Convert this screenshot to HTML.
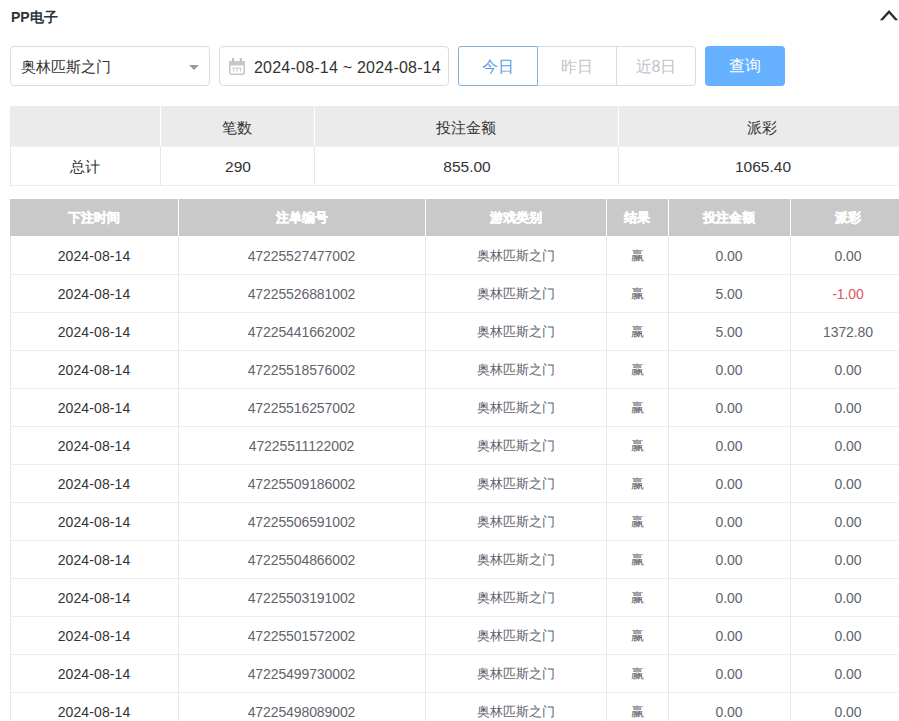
<!DOCTYPE html><html><head><meta charset="utf-8"><style>
*{margin:0;padding:0;box-sizing:border-box}
html,body{width:899px;height:721px;overflow:hidden;background:#fff}
body{position:relative;font-family:"Liberation Sans",sans-serif;color:#333}
.a{position:absolute}
.title{left:11px;top:8px;font-size:14px;font-weight:bold;color:#2b3340;line-height:18px}
.box{border:1px solid #dcdcdc;border-radius:4px;height:40px;top:46px;background:#fff}
.sel{left:10px;width:200px}
.date{left:219px;width:230px}
.seltxt{left:21px;top:57px;font-size:15px;line-height:20px;color:#333}
.datetxt{left:254px;top:58px;font-size:16px;letter-spacing:0.22px;line-height:20px;color:#333}
.btn{top:46px;height:40px;width:80px;border:1px solid #dcdcdc;font-size:16px;line-height:40px;text-align:center;color:#c0c4cc;background:#fff}
.q{left:705px;top:46px;width:80px;height:40px;border-radius:4px;background:#66b1ff;color:#fff;font-size:16px;font-weight:500;line-height:40px;text-align:center}
.sh{background:#ebebeb}
.cell{position:absolute;text-align:center;white-space:nowrap}
.st{font-size:15.5px;color:#333;line-height:20px}
.stc{font-size:15px}
.mh{background:#c9c9c9}
.mht{font-size:13px;font-weight:bold;color:#fff;line-height:18px;-webkit-text-stroke:0.45px #fff}
.mt{font-size:14px;line-height:18px;letter-spacing:-0.1px;color:#5f646c}
.hl{position:absolute;height:1px;background:#ececec}
.vl{position:absolute;width:1px;background:#e8e8e8}
</style></head><body>
<div class="a title">PP电子</div>
<svg class="a" style="left:878px;top:8px" width="22" height="14" viewBox="0 0 22 14"><path d="M1.8 12.2 L11 2.1 L20.2 12.2 L17.1 12.2 L11 5.5 L4.9 12.2 Z" fill="#262d3a"/></svg>
<div class="a box sel"></div>
<div class="a seltxt">奥林匹斯之门</div>
<svg class="a" style="left:189px;top:65px" width="10" height="6" viewBox="0 0 10 6"><path d="M0 0 L10 0 L5 5 Z" fill="#999"/></svg>
<div class="a box date"></div>
<svg class="a" style="left:228px;top:57px" width="18" height="19" viewBox="0 0 18 19"><g fill="none" stroke="#c8c8c8"><rect x="1.8" y="4.8" width="14.4" height="12.4" rx="1.5" stroke-width="1.6"/><path d="M4.5 11 H13.5 M5.5 11 V14.5 M9 11 V14.5 M12.5 11 V14.5" stroke-width="1.1"/></g><rect x="1" y="4" width="16" height="4.5" fill="#c8c8c8"/><rect x="4" y="1" width="2" height="4" fill="#c0c0c0"/><rect x="11.8" y="1" width="2" height="4" fill="#c0c0c0"/></svg>
<div class="a datetxt">2024-08-14 ~ 2024-08-14</div>
<div class="a btn" style="left:616px;width:80px;border-radius:0 4px 4px 0">近8日</div>
<div class="a btn" style="left:537px;width:80px">昨日</div>
<div class="a btn" style="left:458px;width:80px;border-color:#82b2da;color:#5a9fdc;border-radius:3px 0 0 3px">今日</div>
<div class="a q">查询</div>
<div class="a sh" style="left:10px;top:106px;width:896px;height:40px"></div>
<div class="hl" style="left:10px;top:185px;width:896px"></div>
<div class="hl" style="left:10px;top:146px;width:896px;background:#f2f2f2"></div>
<div class="vl" style="left:10px;top:106px;height:80px"></div>
<div class="vl" style="left:160px;top:106px;height:40px;background:#fff"></div>
<div class="vl" style="left:160px;top:146px;height:40px"></div>
<div class="vl" style="left:314px;top:106px;height:40px;background:#fff"></div>
<div class="vl" style="left:314px;top:146px;height:40px"></div>
<div class="vl" style="left:618px;top:106px;height:40px;background:#fff"></div>
<div class="vl" style="left:618px;top:146px;height:40px"></div>
<div class="cell st stc" style="left:10px;width:150px;top:118px"></div>
<div class="cell st stc" style="left:10px;width:150px;top:157px">总计</div>
<div class="cell st stc" style="left:160px;width:154px;top:118px">笔数</div>
<div class="cell st" style="left:161px;width:154px;top:156.5px">290</div>
<div class="cell st stc" style="left:314px;width:304px;top:118px">投注金额</div>
<div class="cell st" style="left:315px;width:304px;top:156.5px">855.00</div>
<div class="cell st stc" style="left:618px;width:288px;top:118px">派彩</div>
<div class="cell st" style="left:619px;width:288px;top:156.5px">1065.40</div>
<div class="a mh" style="left:10px;top:199px;width:896px;height:37px"></div>
<div class="vl" style="left:178px;top:199px;height:37px;background:#fff"></div>
<div class="vl" style="left:178px;top:236px;height:490px"></div>
<div class="vl" style="left:425px;top:199px;height:37px;background:#fff"></div>
<div class="vl" style="left:425px;top:236px;height:490px"></div>
<div class="vl" style="left:606px;top:199px;height:37px;background:#fff"></div>
<div class="vl" style="left:606px;top:236px;height:490px"></div>
<div class="vl" style="left:668px;top:199px;height:37px;background:#fff"></div>
<div class="vl" style="left:668px;top:236px;height:490px"></div>
<div class="vl" style="left:790px;top:199px;height:37px;background:#fff"></div>
<div class="vl" style="left:790px;top:236px;height:490px"></div>
<div class="vl" style="left:10px;top:236px;height:490px"></div>
<div class="cell mht" style="left:10px;width:168px;top:209px">下注时间</div>
<div class="cell mht" style="left:178px;width:247px;top:209px">注单编号</div>
<div class="cell mht" style="left:425px;width:181px;top:209px">游戏类别</div>
<div class="cell mht" style="left:606px;width:62px;top:209px">结果</div>
<div class="cell mht" style="left:668px;width:122px;top:209px">投注金额</div>
<div class="cell mht" style="left:790px;width:116px;top:209px">派彩</div>
<div class="hl" style="left:10px;top:274px;width:896px"></div>
<div class="cell mt" style="left:10px;width:168px;top:247.0px;color:#333;letter-spacing:0.1px;">2024-08-14</div>
<div class="cell mt" style="left:178px;width:247px;top:247.0px;">47225527477002</div>
<div class="cell mt" style="left:425px;width:181px;top:247.0px;font-size:13px;letter-spacing:0;">奥林匹斯之门</div>
<div class="cell mt" style="left:606px;width:62px;top:247.0px;font-size:13px;letter-spacing:0;">赢</div>
<div class="cell mt" style="left:668px;width:122px;top:247.0px;">0.00</div>
<div class="cell mt" style="left:790px;width:116px;top:247.0px;">0.00</div>
<div class="hl" style="left:10px;top:312px;width:896px"></div>
<div class="cell mt" style="left:10px;width:168px;top:285.0px;color:#333;letter-spacing:0.1px;">2024-08-14</div>
<div class="cell mt" style="left:178px;width:247px;top:285.0px;">47225526881002</div>
<div class="cell mt" style="left:425px;width:181px;top:285.0px;font-size:13px;letter-spacing:0;">奥林匹斯之门</div>
<div class="cell mt" style="left:606px;width:62px;top:285.0px;font-size:13px;letter-spacing:0;">赢</div>
<div class="cell mt" style="left:668px;width:122px;top:285.0px;">5.00</div>
<div class="cell mt" style="left:790px;width:116px;top:285.0px;color:#dc5560;">-1.00</div>
<div class="hl" style="left:10px;top:350px;width:896px"></div>
<div class="cell mt" style="left:10px;width:168px;top:323.0px;color:#333;letter-spacing:0.1px;">2024-08-14</div>
<div class="cell mt" style="left:178px;width:247px;top:323.0px;">47225441662002</div>
<div class="cell mt" style="left:425px;width:181px;top:323.0px;font-size:13px;letter-spacing:0;">奥林匹斯之门</div>
<div class="cell mt" style="left:606px;width:62px;top:323.0px;font-size:13px;letter-spacing:0;">赢</div>
<div class="cell mt" style="left:668px;width:122px;top:323.0px;">5.00</div>
<div class="cell mt" style="left:790px;width:116px;top:323.0px;">1372.80</div>
<div class="hl" style="left:10px;top:388px;width:896px"></div>
<div class="cell mt" style="left:10px;width:168px;top:361.0px;color:#333;letter-spacing:0.1px;">2024-08-14</div>
<div class="cell mt" style="left:178px;width:247px;top:361.0px;">47225518576002</div>
<div class="cell mt" style="left:425px;width:181px;top:361.0px;font-size:13px;letter-spacing:0;">奥林匹斯之门</div>
<div class="cell mt" style="left:606px;width:62px;top:361.0px;font-size:13px;letter-spacing:0;">赢</div>
<div class="cell mt" style="left:668px;width:122px;top:361.0px;">0.00</div>
<div class="cell mt" style="left:790px;width:116px;top:361.0px;">0.00</div>
<div class="hl" style="left:10px;top:426px;width:896px"></div>
<div class="cell mt" style="left:10px;width:168px;top:399.0px;color:#333;letter-spacing:0.1px;">2024-08-14</div>
<div class="cell mt" style="left:178px;width:247px;top:399.0px;">47225516257002</div>
<div class="cell mt" style="left:425px;width:181px;top:399.0px;font-size:13px;letter-spacing:0;">奥林匹斯之门</div>
<div class="cell mt" style="left:606px;width:62px;top:399.0px;font-size:13px;letter-spacing:0;">赢</div>
<div class="cell mt" style="left:668px;width:122px;top:399.0px;">0.00</div>
<div class="cell mt" style="left:790px;width:116px;top:399.0px;">0.00</div>
<div class="hl" style="left:10px;top:464px;width:896px"></div>
<div class="cell mt" style="left:10px;width:168px;top:437.0px;color:#333;letter-spacing:0.1px;">2024-08-14</div>
<div class="cell mt" style="left:178px;width:247px;top:437.0px;">47225511122002</div>
<div class="cell mt" style="left:425px;width:181px;top:437.0px;font-size:13px;letter-spacing:0;">奥林匹斯之门</div>
<div class="cell mt" style="left:606px;width:62px;top:437.0px;font-size:13px;letter-spacing:0;">赢</div>
<div class="cell mt" style="left:668px;width:122px;top:437.0px;">0.00</div>
<div class="cell mt" style="left:790px;width:116px;top:437.0px;">0.00</div>
<div class="hl" style="left:10px;top:502px;width:896px"></div>
<div class="cell mt" style="left:10px;width:168px;top:475.0px;color:#333;letter-spacing:0.1px;">2024-08-14</div>
<div class="cell mt" style="left:178px;width:247px;top:475.0px;">47225509186002</div>
<div class="cell mt" style="left:425px;width:181px;top:475.0px;font-size:13px;letter-spacing:0;">奥林匹斯之门</div>
<div class="cell mt" style="left:606px;width:62px;top:475.0px;font-size:13px;letter-spacing:0;">赢</div>
<div class="cell mt" style="left:668px;width:122px;top:475.0px;">0.00</div>
<div class="cell mt" style="left:790px;width:116px;top:475.0px;">0.00</div>
<div class="hl" style="left:10px;top:540px;width:896px"></div>
<div class="cell mt" style="left:10px;width:168px;top:513.0px;color:#333;letter-spacing:0.1px;">2024-08-14</div>
<div class="cell mt" style="left:178px;width:247px;top:513.0px;">47225506591002</div>
<div class="cell mt" style="left:425px;width:181px;top:513.0px;font-size:13px;letter-spacing:0;">奥林匹斯之门</div>
<div class="cell mt" style="left:606px;width:62px;top:513.0px;font-size:13px;letter-spacing:0;">赢</div>
<div class="cell mt" style="left:668px;width:122px;top:513.0px;">0.00</div>
<div class="cell mt" style="left:790px;width:116px;top:513.0px;">0.00</div>
<div class="hl" style="left:10px;top:578px;width:896px"></div>
<div class="cell mt" style="left:10px;width:168px;top:551.0px;color:#333;letter-spacing:0.1px;">2024-08-14</div>
<div class="cell mt" style="left:178px;width:247px;top:551.0px;">47225504866002</div>
<div class="cell mt" style="left:425px;width:181px;top:551.0px;font-size:13px;letter-spacing:0;">奥林匹斯之门</div>
<div class="cell mt" style="left:606px;width:62px;top:551.0px;font-size:13px;letter-spacing:0;">赢</div>
<div class="cell mt" style="left:668px;width:122px;top:551.0px;">0.00</div>
<div class="cell mt" style="left:790px;width:116px;top:551.0px;">0.00</div>
<div class="hl" style="left:10px;top:616px;width:896px"></div>
<div class="cell mt" style="left:10px;width:168px;top:589.0px;color:#333;letter-spacing:0.1px;">2024-08-14</div>
<div class="cell mt" style="left:178px;width:247px;top:589.0px;">47225503191002</div>
<div class="cell mt" style="left:425px;width:181px;top:589.0px;font-size:13px;letter-spacing:0;">奥林匹斯之门</div>
<div class="cell mt" style="left:606px;width:62px;top:589.0px;font-size:13px;letter-spacing:0;">赢</div>
<div class="cell mt" style="left:668px;width:122px;top:589.0px;">0.00</div>
<div class="cell mt" style="left:790px;width:116px;top:589.0px;">0.00</div>
<div class="hl" style="left:10px;top:654px;width:896px"></div>
<div class="cell mt" style="left:10px;width:168px;top:627.0px;color:#333;letter-spacing:0.1px;">2024-08-14</div>
<div class="cell mt" style="left:178px;width:247px;top:627.0px;">47225501572002</div>
<div class="cell mt" style="left:425px;width:181px;top:627.0px;font-size:13px;letter-spacing:0;">奥林匹斯之门</div>
<div class="cell mt" style="left:606px;width:62px;top:627.0px;font-size:13px;letter-spacing:0;">赢</div>
<div class="cell mt" style="left:668px;width:122px;top:627.0px;">0.00</div>
<div class="cell mt" style="left:790px;width:116px;top:627.0px;">0.00</div>
<div class="hl" style="left:10px;top:692px;width:896px"></div>
<div class="cell mt" style="left:10px;width:168px;top:665.0px;color:#333;letter-spacing:0.1px;">2024-08-14</div>
<div class="cell mt" style="left:178px;width:247px;top:665.0px;">47225499730002</div>
<div class="cell mt" style="left:425px;width:181px;top:665.0px;font-size:13px;letter-spacing:0;">奥林匹斯之门</div>
<div class="cell mt" style="left:606px;width:62px;top:665.0px;font-size:13px;letter-spacing:0;">赢</div>
<div class="cell mt" style="left:668px;width:122px;top:665.0px;">0.00</div>
<div class="cell mt" style="left:790px;width:116px;top:665.0px;">0.00</div>
<div class="hl" style="left:10px;top:730px;width:896px"></div>
<div class="cell mt" style="left:10px;width:168px;top:703.0px;color:#333;letter-spacing:0.1px;">2024-08-14</div>
<div class="cell mt" style="left:178px;width:247px;top:703.0px;">47225498089002</div>
<div class="cell mt" style="left:425px;width:181px;top:703.0px;font-size:13px;letter-spacing:0;">奥林匹斯之门</div>
<div class="cell mt" style="left:606px;width:62px;top:703.0px;font-size:13px;letter-spacing:0;">赢</div>
<div class="cell mt" style="left:668px;width:122px;top:703.0px;">0.00</div>
<div class="cell mt" style="left:790px;width:116px;top:703.0px;">0.00</div>
</body></html>
